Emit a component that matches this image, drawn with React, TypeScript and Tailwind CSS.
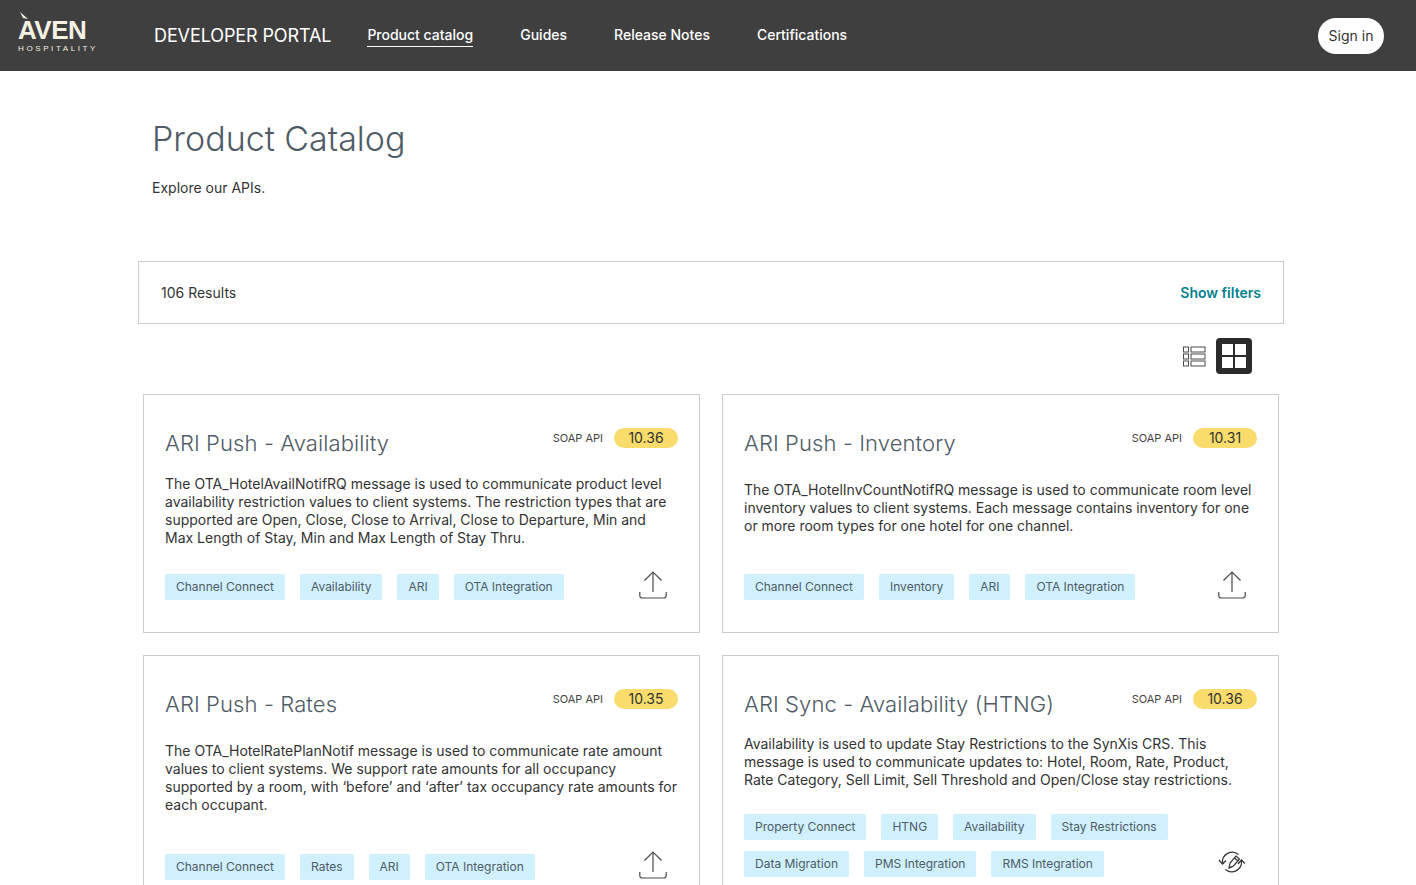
import React from "react";

const UploadIcon = () => (
  <svg width="28" height="28" viewBox="0 0 28 28" fill="none" stroke="#4a4a4a" strokeWidth="1.2">
    <path d="M14 21V1.5" />
    <path d="M5.5 9.5 14 1l8.5 8.5" />
    <path d="M0.8 21v3.5a2.5 2.5 0 0 0 2.5 2.5h21.4a2.5 2.5 0 0 0 2.5-2.5V21" />
  </svg>
);

const SyncIcon = () => (
  <svg width="28" height="28" viewBox="0 0 28 28" fill="none" stroke="#333" strokeWidth="1.2">
    <path d="M4.5 15A9.8 9.8 0 0 1 20.5 6.5" />
    <path d="M23.5 13A9.8 9.8 0 0 1 7.5 21.5" />
    <path d="M1 12l3.5 4L8 12.5" />
    <path d="M20 16l3.5-4 3.500 3.500" />
    <path d="M11 20l1-5 6-7 3.500 3-6 7z" />
    <path d="M16.500 10l3.500 3" />
    <path d="M11 20l3.500-1.500" />
  </svg>
);

const ListIcon = () => (
  <svg width="23" height="21" viewBox="0 0 23 21" fill="none" stroke="#4a4a4a" strokeWidth="1">
    <rect x="0.500" y="1" width="5" height="5" />
    <rect x="8" y="1" width="14" height="5" />
    <rect x="0.500" y="8" width="5" height="5" />
    <rect x="8" y="8" width="14" height="5" />
    <rect x="0.500" y="15" width="5" height="5" />
    <rect x="8" y="15" width="14" height="5" />
  </svg>
);

type CardData = {
  title: string;
  version: string;
  desc: string;
  descClass: string;
  tagRows: string[][];
  tagsClass: string;
  icon: "upload" | "sync";
};

const cards: CardData[] = [
  {
    title: "ARI Push - Availability",
    version: "10.36",
    desc: "The OTA_HotelAvailNotifRQ message is used to communicate product level availability restriction values to client systems. The restriction types that are supported are Open, Close, Close to Arrival, Close to Departure, Min and Max Length of Stay, Min and Max Length of Stay Thru.",
    descClass: "mt-[18px] h-[72px]",
    tagRows: [["Channel Connect", "Availability", "ARI", "OTA Integration"]],
    tagsClass: "mt-[24px]",
    icon: "upload",
  },
  {
    title: "ARI Push - Inventory",
    version: "10.31",
    desc: "The OTA_HotelInvCountNotifRQ message is used to communicate room level inventory values to client systems. Each message contains inventory for one or more room types for one hotel for one channel.",
    descClass: "mt-[24px] h-[54px]",
    tagRows: [["Channel Connect", "Inventory", "ARI", "OTA Integration"]],
    tagsClass: "mt-[36px]",
    icon: "upload",
  },
  {
    title: "ARI Push - Rates",
    version: "10.35",
    desc: "The OTA_HotelRatePlanNotif message is used to communicate rate amount values to client systems. We support rate amounts for all occupancy supported by a room, with ‘before’ and ‘after’ tax occupancy rate amounts for each occupant.",
    descClass: "mt-[24px] h-[72px]",
    tagRows: [["Channel Connect", "Rates", "ARI", "OTA Integration"]],
    tagsClass: "mt-[37px]",
    icon: "upload",
  },
  {
    title: "ARI Sync - Availability (HTNG)",
    version: "10.36",
    desc: "Availability is used to update Stay Restrictions to the SynXis CRS. This message is used to communicate updates to: Hotel, Room, Rate, Product, Rate Category, Sell Limit, Sell Threshold and Open/Close stay restrictions.",
    descClass: "mt-[17px] h-[54px]",
    tagRows: [
      ["Property Connect", "HTNG", "Availability", "Stay Restrictions"],
      ["Data Migration", "PMS Integration", "RMS Integration"],
    ],
    tagsClass: "mt-[25px]",
    icon: "sync",
  },
];

const Card = ({ c }: { c: CardData }) => (
  <div className="border border-[#cccccc] pt-[33px] px-[21px] pb-[32px] min-h-[236px]">
    <div className="flex justify-between items-start">
      <h2 className="mt-[1px] text-[22px] leading-[28px] font-light text-[#4f5b66] tracking-[0.1px]">{c.title}</h2>
      <div className="flex items-center">
        <span className="text-[11px] leading-[20px] text-[#444444]">SOAP API</span>
        <span className="ml-[11px] w-[64px] h-[20px] rounded-full bg-[#f9dc6b] text-[14px] leading-[20px] text-center text-[#333333]">{c.version}</span>
      </div>
    </div>
    <p className={`${c.descClass} text-[14px] leading-[18px] text-[#333333]`}>{c.desc}</p>
    <div className={`${c.tagsClass} flex justify-between items-end`}>
      <div className="flex flex-col gap-[11px]">
        {c.tagRows.map((row, i) => (
          <div key={i} className="flex gap-[15px]">
            {row.map((t) => (
              <span key={t} className="h-[26px] px-[11px] rounded-[2px] bg-[#d0f0fd] text-[12px] leading-[26px] text-[#4f5b66]">{t}</span>
            ))}
          </div>
        ))}
      </div>
      <div className="mr-[11px] mb-[1px]">{c.icon === "upload" ? <UploadIcon /> : <SyncIcon />}</div>
    </div>
  </div>
);

export default function App() {
  return (
    <div className="h-[885px] overflow-hidden bg-white font-['Inter',sans-serif]">
      <header className="h-[71px] bg-[#3f3f3f] flex items-center pl-[18px] pr-[32px] text-white">
        <div className="w-[84px] flex flex-col items-start text-[#f5f1e3] relative">
          <svg className="absolute left-[2px] top-[-6px]" width="9" height="8" viewBox="0 0 9 8">
            <path d="M0 0 8 7 3 6z" fill="#f5f1e3" />
          </svg>
          <span className="font-['Liberation_Sans',sans-serif] font-bold text-[26px] leading-[24px] tracking-[-0.5px]">AVEN</span>
          <span className="mt-[2px] font-['Liberation_Sans',sans-serif] text-[8px] leading-[10px] tracking-[2.6px] whitespace-nowrap">HOSPITALITY</span>
        </div>
        <span className="ml-[52px] text-[18px] font-normal tracking-[-0.1px] whitespace-nowrap">DEVELOPER PORTAL</span>
        <nav className="ml-[36px] flex gap-[47px] text-[14px] font-medium">
          <span className="border-b border-white leading-[20px] pb-[1px]">Product catalog</span>
          <span className="leading-[20px]">Guides</span>
          <span className="leading-[20px]">Release Notes</span>
          <span className="leading-[20px]">Certifications</span>
        </nav>
        <button className="ml-auto w-[66px] h-[36px] rounded-full bg-white text-[#333333] text-[14px]">Sign in</button>
      </header>

      <main className="w-[1146px] ml-[138px]">
        <h1 className="ml-[14px] mt-[46px] text-[34px] leading-[44px] font-light text-[#4f5b66]">Product Catalog</h1>
        <p className="ml-[14px] mt-[17px] text-[14px] leading-[20px] text-[#333333]">Explore our APIs.</p>

        <div className="mt-[63px] h-[63px] border border-[#cccccc] flex items-center justify-between px-[22px]">
          <span className="text-[14px] text-[#333333]">106 Results</span>
          <span className="text-[14px] font-semibold text-[#00818f]">Show filters</span>
        </div>

        <div className="mt-[14px] flex justify-end items-center gap-[10px] pr-[32px]">
          <ListIcon />
          <div className="w-[36px] h-[36px] rounded-[4px] bg-[#2b2b2b] p-[6px] grid grid-cols-2 gap-[2px]">
            <span className="bg-white" />
            <span className="bg-white" />
            <span className="bg-white" />
            <span className="bg-white" />
          </div>
        </div>

        <div className="mt-[20px] mx-[5px] grid grid-cols-2 gap-[22px]">
          {cards.map((c) => (
            <Card key={c.title} c={c} />
          ))}
        </div>
      </main>
    </div>
  );
}
